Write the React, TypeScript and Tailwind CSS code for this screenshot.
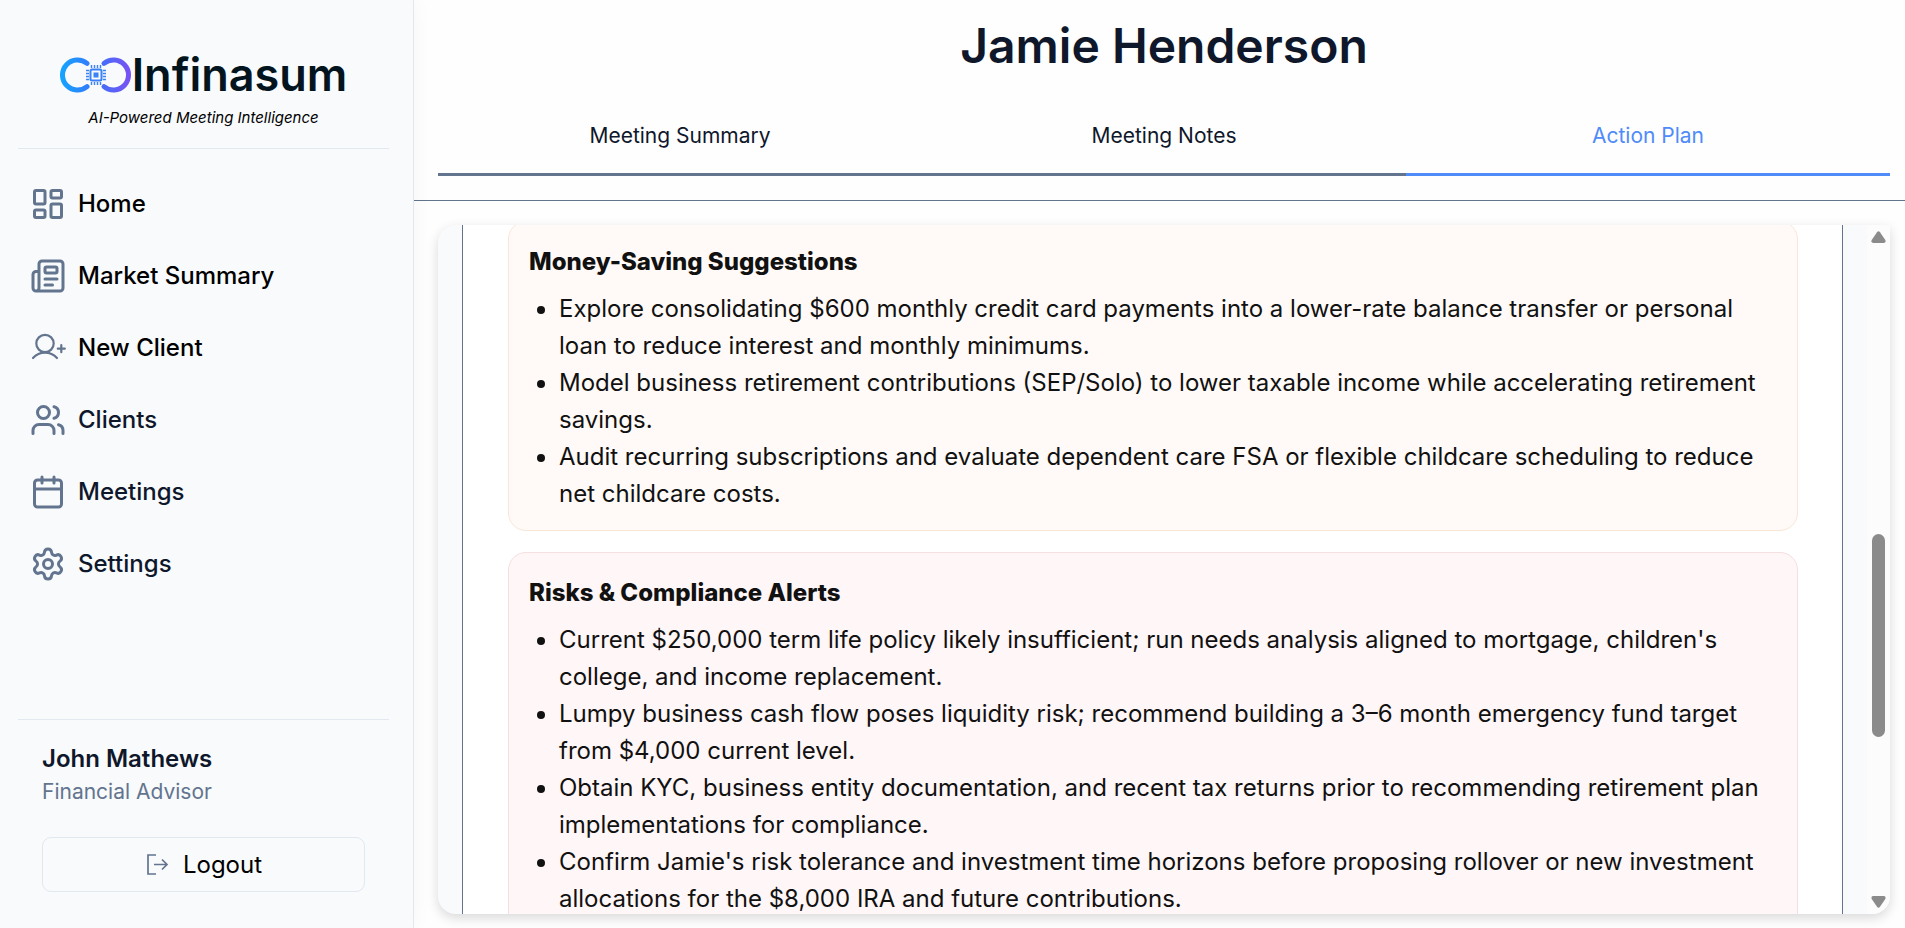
import React from 'react';
import { Calendar, LayoutDashboard, Newspaper, Settings, Users } from 'lucide-react';

function LogoMark() {
  return (
    <svg width="72" height="36" viewBox="0 0 72 36" fill="none" aria-hidden="true">
      <defs>
        <linearGradient id="mark" x1="0" y1="0" x2="72" y2="0" gradientUnits="userSpaceOnUse">
          <stop offset="0" stopColor="#14a5ff" />
          <stop offset="0.45" stopColor="#3578fb" />
          <stop offset="1" stopColor="#7c4ff3" />
        </linearGradient>
      </defs>
      <path d="M27 6.400A15 15 0 1 0 27 29.600" stroke="url(#mark)" strokeWidth="5" strokeLinecap="round" />
      <path d="M44 6.400A15 15 0 1 1 44 29.600" stroke="url(#mark)" strokeWidth="5" strokeLinecap="round" />
      <rect x="30.5" y="12.5" width="11" height="11" rx="1.5" stroke="#3b82f6" strokeWidth="2" />
      <rect x="33.5" y="15.5" width="5" height="5" fill="#3b82f6" />
      <path
        d="M31.5 8v3M34.5 8v3M37.5 8v3M40.5 8v3M31.5 25v3M34.5 25v3M37.5 25v3M40.5 25v3M26 13.5h3M26 16.5h3M26 19.5h3M26 22.5h3M43 13.5h3M43 16.5h3M43 19.5h3M43 22.5h3"
        stroke="#3b82f6"
        strokeWidth="1.4"
      />
    </svg>
  );
}

function UserAddIcon({ className }: { className?: string }) {
  return (
    <svg className={className} viewBox="0 0 36 36" fill="none" stroke="currentColor" strokeWidth="2.2" strokeLinecap="round" aria-hidden="true">
      <circle cx="15" cy="13.5" r="8.7" />
      <path d="M3 28C9.500 20.700 20.500 20.700 27 28M27.800 18.700h7M31.300 15.200v7" />
    </svg>
  );
}

function LogoutIcon() {
  return (
    <svg className="text-slate-500" width="24" height="24" viewBox="0 0 24 24" fill="none" stroke="currentColor" strokeWidth="1.7" aria-hidden="true">
      <path d="M11 2H3v19h8M9 11.500h13M17 6.500l5 5-5 5" />
    </svg>
  );
}

const navItems = [
  { label: 'Home', icon: LayoutDashboard, color: 'text-black' },
  { label: 'Market Summary', icon: Newspaper, color: 'text-black' },
  { label: 'New Client', icon: UserAddIcon, color: 'text-black' },
  { label: 'Clients', icon: Users, color: 'text-slate-900' },
  { label: 'Meetings', icon: Calendar, color: 'text-slate-900' },
  { label: 'Settings', icon: Settings, color: 'text-slate-900' },
];

const tabs = ['Meeting Summary', 'Meeting Notes', 'Action Plan'];

const savings = [
  'Explore consolidating $600 monthly credit card payments into a lower-rate balance transfer or personal loan to reduce interest and monthly minimums.',
  'Model business retirement contributions (SEP/Solo) to lower taxable income while accelerating retirement savings.',
  'Audit recurring subscriptions and evaluate dependent care FSA or flexible childcare scheduling to reduce net childcare costs.',
];

const risks = [
  "Current $250,000 term life policy likely insufficient; run needs analysis aligned to mortgage, children's college, and income replacement.",
  'Lumpy business cash flow poses liquidity risk; recommend building a 3–6 month emergency fund target from $4,000 current level.',
  'Obtain KYC, business entity documentation, and recent tax returns prior to recommending retirement plan implementations for compliance.',
  "Confirm Jamie's risk tolerance and investment time horizons before proposing rollover or new investment allocations for the $8,000 IRA and future contributions.",
];

function Sidebar() {
  return (
    <aside className="z-10 flex w-[414px] shrink-0 flex-col border-r border-slate-200 bg-slate-50 pr-6 pl-[18px] shadow-[0_0_20px_rgba(0,0,0,0.04)]">
      {/* Brand */}
      <div className="flex flex-col items-center border-b border-slate-200 pt-[50px] pb-[18px]">
        <div className="flex items-center">
          <LogoMark />
          <span className="text-[45px] leading-[50px] font-semibold text-[#02141d]">Infinasum</span>
        </div>
        <p className="mt-[6px] text-[15px] leading-6 italic text-black">AI-Powered Meeting Intelligence</p>
      </div>

      {/* Navigation */}
      <nav className="mt-[19px] flex flex-col">
        {navItems.map(({ label, icon: Icon, color }) => (
          <a key={label} href="#" className={`flex h-[72px] items-center gap-3 px-3 text-2xl font-medium ${color}`}>
            <Icon className="size-9 text-slate-500" />
            {label}
          </a>
        ))}
      </nav>

      {/* User */}
      <div className="mt-auto border-t border-slate-200 px-6 pt-[23px] pb-9">
        <p className="text-2xl font-semibold text-slate-900">John Mathews</p>
        <p className="text-[21px] leading-[34px] text-slate-500">Financial Advisor</p>
        <button className="mt-7 flex h-[55px] w-full items-center justify-center gap-[14px] rounded-[9px] border border-slate-200 text-2xl text-black">
          <LogoutIcon />
          Logout
        </button>
      </div>
    </aside>
  );
}

function Section({ title, items, className }: { title: string; items: string[]; className: string }) {
  return (
    <section className={`rounded-[18px] border px-5 pt-[21px] pb-[18px] ${className}`}>
      <h2 className="mb-[10px] font-extrabold">{title}</h2>
      <ul className="list-disc pl-[30px]">
        {items.map((item) => (
          <li key={item}>{item}</li>
        ))}
      </ul>
    </section>
  );
}

function ScrollTrack() {
  return (
    <div className="flex w-[23px] shrink-0 flex-col items-center bg-[#fcfcfc] py-[6px] text-[#8b8b8b]">
      <svg width="15" height="12" viewBox="0 0 15 12" fill="currentColor" aria-hidden="true">
        <path d="M6 1.200Q7.500-.5 9 1.200L14.300 9Q15.200 11.500 13 12H2Q-.2 11.500.7 9Z" />
      </svg>
      <div className="flex flex-1 flex-col">
        <div className="grow-[291]" />
        <div className="w-[13px] grow-[203] rounded-full bg-[#8b8b8b]" />
        <div className="grow-[159]" />
      </div>
      <svg width="15" height="12" viewBox="0 0 15 12" fill="currentColor" aria-hidden="true">
        <path d="M6 10.800Q7.500 12.500 9 10.800L14.300 3Q15.200.5 13 0H2Q-.2.5.7 3Z" />
      </svg>
    </div>
  );
}

function App() {
  return (
    <div className="flex h-screen overflow-hidden bg-[#fefefe] font-['Inter',sans-serif]">
      <Sidebar />

      <main className="flex min-w-0 flex-1 flex-col">
        {/* Header */}
        <header className="border-b border-slate-500 pt-4 pr-[15px] pb-6 pl-6">
          <h1 className="text-center text-5xl leading-[60px] font-semibold text-slate-900">Jamie Henderson</h1>
          <div className="mt-[18px] grid grid-cols-3" role="tablist">
            {tabs.map((tab) => (
              <button
                key={tab}
                role="tab"
                aria-selected={tab === 'Action Plan'}
                className={`h-[82px] border-b-[3px] pt-1 text-[21px] ${
                  tab === 'Action Plan' ? 'border-[#4f8bf9] text-[#4f8bf9]' : 'border-slate-500 text-slate-900'
                }`}
              >
                {tab}
              </button>
            ))}
          </div>
        </header>

        {/* Action plan */}
        <div className="flex min-h-0 flex-1 pt-6 pr-[15px] pb-[14px] pl-6">
          <div className="flex flex-1 overflow-hidden rounded-[18px] rounded-tr-none bg-slate-50 shadow-[0_4px_12px_rgba(0,0,0,0.15)]">
            <div className="min-w-0 flex-1 px-6">
              <div className="border-x border-slate-500 bg-white pr-11 pl-[45px] text-2xl leading-[37px] text-[#111]">
                <div className="-mt-1 flex flex-col gap-[21px]">
                  <Section title="Money-Saving Suggestions" items={savings} className="border-[#f8e6d8] bg-[#fffaf7]" />
                  <Section title="Risks & Compliance Alerts" items={risks} className="border-[#f5dfe0] bg-[#fff6f7]" />
                </div>
              </div>
            </div>
            <ScrollTrack />
          </div>
        </div>
      </main>
    </div>
  );
}

export default App;
